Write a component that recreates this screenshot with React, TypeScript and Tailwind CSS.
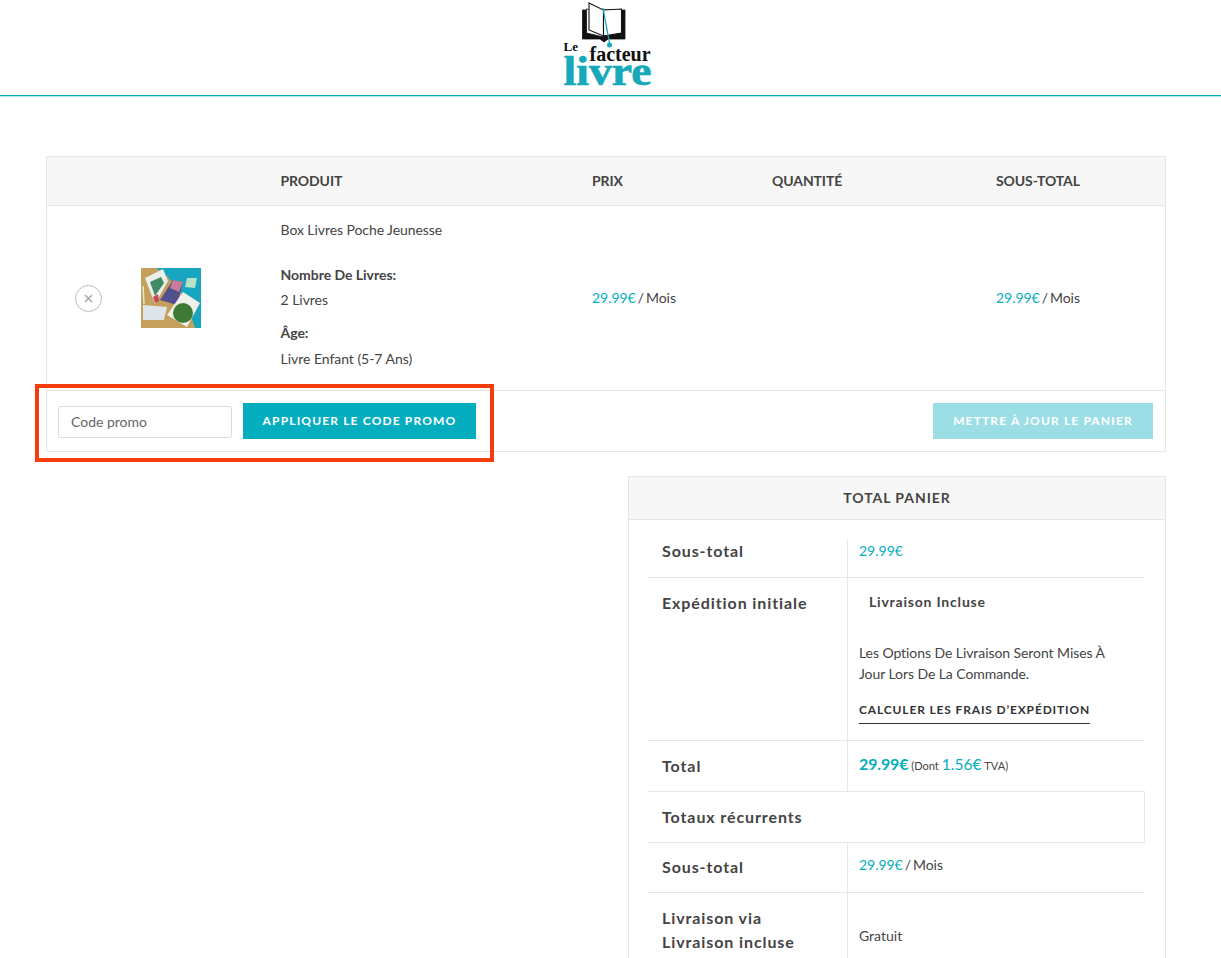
const teal = 'text-[#04aebf]';
const label = 'pl-[14px] text-[16px] font-bold leading-[24px] tracking-[0.9px]';
const mois = 'tracking-[-0.05px] [word-spacing:-1.5px]';

function Logo() {
  return (
    <svg width="100" height="94" viewBox="0 0 100 94" className="block">
      {/* open book */}
      <path d="M21.5 9 H64 V38 H47 L43 41 L39 38 H21.5 Z" fill="#111" stroke="#111" strokeWidth="0.8" strokeLinejoin="round" />
      <path d="M25.5 8 L42.5 11 L42.5 36 L25.5 32 Z" fill="#fff" stroke="#111" strokeWidth="0.8" />
      <path d="M28 2 L42.5 9 L42.5 35 L28 29 Z" fill="#fff" stroke="#111" strokeWidth="1.1" />
      <path d="M42.5 9 L60.5 8 L60.5 32 L42.5 35 Z" fill="#fff" stroke="#111" strokeWidth="1.1" />
      <path d="M42 7 L48.5 42" stroke="#15a9ba" strokeWidth="1.3" />
      <circle cx="48.5" cy="44" r="2.5" fill="#15a9ba" />
      <text x="2.5" y="50" fontFamily="'Liberation Serif', serif" fontWeight="700" fontSize="13" fill="#111">Le</text>
      <text x="28.5" y="60" fontFamily="'Liberation Serif', serif" fontWeight="700" fontSize="20" fill="#111">facteur</text>
      <text x="2.5" y="84" fontFamily="'Liberation Serif', serif" fontWeight="700" fontSize="43" textLength="88" lengthAdjust="spacingAndGlyphs" stroke="#15a9ba" strokeWidth="0.7" fill="#15a9ba">livre</text>
    </svg>
  );
}

function Thumb() {
  return (
    <div className="h-[60px] w-[60px] overflow-hidden">
      <svg width="60" height="60" viewBox="0 0 60 60" className="block blur-[0.5px]">
        <rect width="60" height="60" fill="#c5a05c" />
        <path d="M15 0 H60 V60 H54 L44 30 L26 8 Z" fill="#17a5bf" />
        <path d="M4 10 L22 1 L27 13 L14 36 Z" fill="#eceee8" />
        <path d="M9 14 L20 9 L23 15 L14 28 Z" fill="#3f8a68" />
        <path d="M12 29 L17 26 L18 33 L14 35 Z" fill="#c9475a" />
        <path d="M19 32 L32 12 L42 14 L36 37 Z" fill="#51508a" />
        <path d="M32 12 L42 14 L38 24 L29 20 Z" fill="#c97c9a" />
        <path d="M2 37 L26 39 L23 52 L2 52 Z" fill="#dfe4e8" />
        <path d="M42 24 L59 35 L46 59 L26 47 Z" fill="#eff0ea" />
        <circle cx="42" cy="45" r="10" fill="#3f7a35" />
        <path d="M46 10 L56 10 L54 20 L44 19 Z" fill="#b8e2c6" />
        <path d="M2 18 L3 36" stroke="#d8e8d0" strokeWidth="1.5" />
      </svg>
    </div>
  );
}

export default function App() {
  return (
    <div className="relative h-[958px] overflow-hidden bg-white font-['Lato','Liberation_Sans',sans-serif] text-[14px] text-[#444] [font-variant-ligatures:none]">
      <header className="flex h-[95px] justify-center">
        <div className="mt-px">
          <Logo />
        </div>
      </header>
      <div className="h-[2px] border-b border-[#b5e6eb] bg-[#04aebf]" />

      <main className="pl-[46px] pr-[55px] pt-[59px]">
        <section className="border border-[#e6e6e6]">
          <div className="grid h-[49px] grid-cols-[233.5px_311.5px_180px_224px_1fr] items-center border-b border-[#e6e6e6] bg-[#f7f7f7] pb-[2px] text-[14px] font-bold tracking-[-0.1px] text-[#444]">
            <span className="col-start-2">PRODUIT</span>
            <span>PRIX</span>
            <span>QUANTITÉ</span>
            <span>SOUS-TOTAL</span>
          </div>

          <div className="grid h-[185px] grid-cols-[233.5px_311.5px_180px_224px_1fr] items-center border-b border-[#e6e6e6]">
            <div className="flex items-center pl-[28px]">
              <div className="flex h-[27px] w-[27px] items-center justify-center rounded-full border border-[#bbb] text-[#aaa]">
                <svg width="9" height="9" viewBox="0 0 9 9">
                  <path d="M1 1 L8 8 M8 1 L1 8" stroke="currentColor" strokeWidth="1.6" />
                </svg>
              </div>
              <div className="ml-[39px]">
                <Thumb />
              </div>
            </div>
            <div className="pb-[8px] text-[14px] tracking-[-0.03px]">
              <p className="leading-[21px] tracking-[-0.07px]">Box Livres Poche Jeunesse</p>
              <p className="mt-[24px] font-bold leading-[21px]">Nombre De Livres:</p>
              <p className="mt-[4px] leading-[21px]">2 Livres</p>
              <p className="mt-[12px] font-bold leading-[21px]">Âge:</p>
              <p className="mt-[5px] leading-[21px]">Livre Enfant (5-7 Ans)</p>
            </div>
            <p className={`pb-[2px] ${mois}`}>
              <span className={teal}>29.99€</span> / Mois
            </p>
            <span />
            <p className={`pb-[2px] ${mois}`}>
              <span className={teal}>29.99€</span> / Mois
            </p>
          </div>

          <div className="flex h-[60px] items-center justify-between pl-[11px] pr-[12px]">
            <div className="flex items-center gap-[11px]">
              <div className="mt-[2px] flex h-[32px] w-[174px] items-center rounded-[2px] border border-[#ddd] pb-[2px] pl-[12px] text-[#666]">Code promo</div>
              <button className="h-[36px] w-[233px] bg-[#04aebf] text-[12px] font-bold tracking-[1.15px] text-white">APPLIQUER LE CODE PROMO</button>
            </div>
            <button className="h-[36px] w-[220px] bg-[#9bdee5] text-[12px] font-bold tracking-[1.15px] text-white">METTRE À JOUR LE PANIER</button>
          </div>
        </section>

        <section className="ml-[582px] mt-[24px] border border-[#e6e6e6] pb-[40px]">
          <h2 className="flex h-[43px] items-center justify-center border-b border-[#e6e6e6] bg-[#f7f7f7] pb-[2px] text-[14px] font-bold tracking-[0.95px] text-[#444]">TOTAL PANIER</h2>

          <div className="ml-[19px] mr-[20px] mt-[20px] text-[14px]">
            <div className="grid h-[38px] grid-cols-[199px_1fr] border-b border-[#e6e6e6]">
              <div className={`${label} -mt-px`}>Sous-total</div>
              <div className={`border-l border-[#e6e6e6] pl-[11px] leading-[21px] ${teal}`}>29.99€</div>
            </div>

            <div className="grid h-[163px] grid-cols-[199px_1fr] border-b border-[#e6e6e6]">
              <div className={`${label} pt-[13px]`}>Expédition initiale</div>
              <div className="border-l border-[#e6e6e6] pl-[11px] pr-[30px]">
                <p className="pl-[10px] pt-[13px] font-bold leading-[21px] tracking-[0.8px]">Livraison Incluse</p>
                <p className="mt-[30px] leading-[21px] tracking-[-0.07px]">Les Options De Livraison Seront Mises À Jour Lors De La Commande.</p>
                <a className="mt-[17px] inline-block border-b border-[#333] pb-[4px] text-[12px] font-bold leading-[18px] tracking-[0.85px] text-[#333]">CALCULER LES FRAIS D’EXPÉDITION</a>
              </div>
            </div>

            <div className="grid h-[50px] grid-cols-[199px_1fr]">
              <div className={`${label} pt-[13px]`}>Total</div>
              <div className="border-l border-[#e6e6e6] pl-[11px] pt-[11px] leading-[24px] [word-spacing:-0.6px]">
                <span className={`text-[16px] font-bold tracking-[-0.15px] ${teal}`}>29.99€</span>{' '}
                <span className="text-[11px]">(Dont</span>{' '}
                <span className={`text-[15.5px] ${teal}`}>1.56€</span>{' '}
                <span className="text-[11px]">TVA)</span>
              </div>
            </div>

            <div className={`${label} h-[52px] border border-l-0 border-[#e6e6e6] pt-[13px]`}>Totaux récurrents</div>

            <div className="grid h-[50px] grid-cols-[199px_1fr] border-b border-[#e6e6e6]">
              <div className={`${label} pt-[12px]`}>Sous-total</div>
              <div className={`border-l border-[#e6e6e6] pl-[11px] pt-[11px] leading-[21px] ${mois}`}>
                <span className={teal}>29.99€</span> / Mois
              </div>
            </div>

            <div className="grid h-[80px] grid-cols-[199px_1fr]">
              <div className={`${label} pt-[13px]`}>
                Livraison via
                <br />
                Livraison incluse
              </div>
              <div className="border-l border-[#e6e6e6] pl-[11px] pt-[32px] leading-[21px]">Gratuit</div>
            </div>
          </div>
        </section>
      </main>

      {/* annotation drawn on top of the screenshot */}
      <div className="pointer-events-none absolute left-[35px] top-[384px] h-[78px] w-[459px] border-4 border-[#f53d0c]" />
    </div>
  );
}
